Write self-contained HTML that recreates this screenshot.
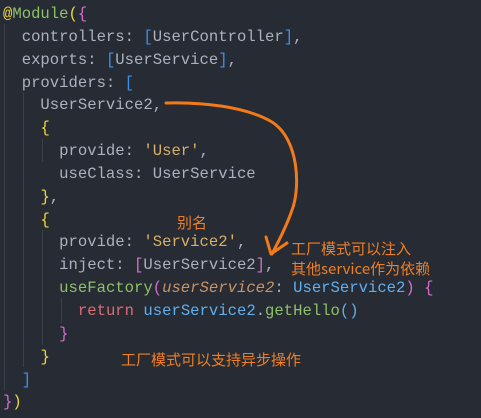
<!DOCTYPE html>
<html><head><meta charset="utf-8"><style>
body{margin:0;width:481px;height:418px;background:#272b33;overflow:hidden;position:relative}
pre{margin:0;position:absolute;left:3px;top:3px;font:15.6px/22.85px "Liberation Mono",monospace;color:#abb2bf;white-space:pre}
.b{color:#3d8fe8}.y{color:#f0d53c}.p{color:#d36fd0}.g{color:#8fc06a}.s{color:#d8b06a}.r{color:#e06c75}.u{color:#61afef}.i{color:#c7946a;font-style:italic}
.a{position:absolute;color:#f07f24;font:15px "Noto Sans CJK SC",sans-serif;white-space:nowrap}
.gd{position:absolute;width:1px;background:#3a3f48}
</style></head><body>
<div class="gd" style="left:4px;top:24px;height:366px"></div>
<div class="gd" style="left:23px;top:93px;height:274px"></div>
<div class="gd" style="left:42px;top:139px;height:23px"></div>
<div class="gd" style="left:42px;top:230px;height:115px"></div>
<div class="gd" style="left:61px;top:298px;height:25px"></div>
<pre><span class="y">@</span><span class="g">Module</span><span class="y">(</span><span class="p">{</span>
  controllers: <span class="b">[</span>UserController<span class="b">]</span>,
  exports: <span class="b">[</span>UserService<span class="b">]</span>,
  providers: <span class="b">[</span>
    UserService2,
    <span class="y">{</span>
      provide: <span class="s">'User'</span>,
      useClass: UserService
    <span class="y">}</span>,
    <span class="y">{</span>
      provide: <span class="s">'Service2'</span>,
      inject: <span class="p">[</span>UserService2<span class="p">]</span>,
      <span class="g">useFactory</span><span class="p">(</span><span class="i">userService2</span>: <span class="u">UserService2</span><span class="p">)</span> <span class="p">{</span>
        <span class="r">return</span> <span class="u">userService2</span>.<span class="g">getHello</span><span class="u">()</span>
      <span class="p">}</span>
    <span class="y">}</span>
  <span class="b">]</span>
<span class="p">}</span><span class="y">)</span></pre>
<div class="a" style="left:177px;top:212px">别名</div>
<div class="a" style="left:291px;top:238px">工厂模式可以注入</div>
<div class="a" style="left:291px;top:258px">其他service作为依赖</div>
<div class="a" style="left:121px;top:349px">工厂模式可以支持异步操作</div>
<svg width="481" height="418" style="position:absolute;left:0;top:0" fill="none" stroke="#f27a1a" stroke-width="3" stroke-linecap="round" stroke-linejoin="round">
<path d="M166 103 C200 102 245 106 272 122 C300 140 300 190 292 210 C286 228 278 242 272 254"/>
<path d="M266 237 L271 254 L287 243"/>
</svg>
</body></html>
